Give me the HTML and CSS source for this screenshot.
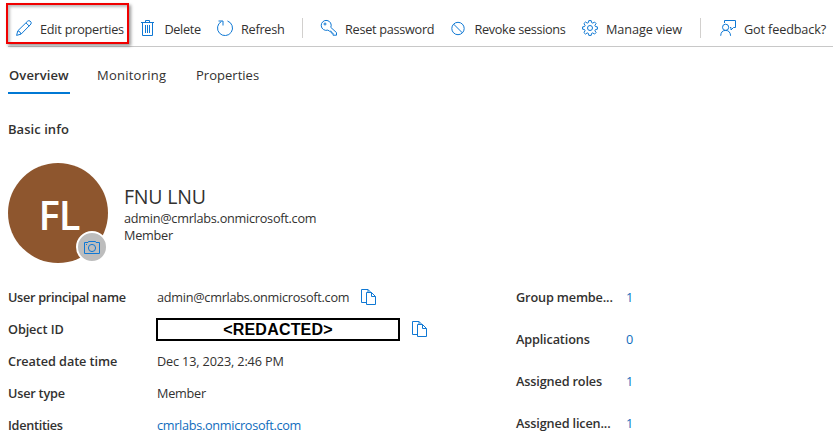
FILE: index.html
```html
<!DOCTYPE html>
<html lang="en">
<head>
<meta charset="utf-8">
<title>FNU LNU</title>
<link rel="stylesheet" href="styles.css">
</head>
<body>
<svg class="defs" width="0" height="0" aria-hidden="true">
  <symbol id="copy" viewBox="0 0 16 17"><path d="M5.5 13.5H.5V.5H7L10 3.5M7 .5V3M5.5 3.5H10.5L14.5 7.5V15.5H5.5ZM10.5 3.5V7.5H14.5"/></symbol>
</svg>
<header class="toolbar">
  <button class="cmd marked"><svg class="icon" viewBox="0 0 16 16"><path d="M.6 15.4 1.8 10.8 11.6 1.2Q12.7.2 14 1 15.8 2.2 15 4L5.1 14.1ZM10 2.9 13.2 6M2 10.8Q4.3 11.4 5 14"/></svg><span class="t-edit">Edit properties</span></button>
  <button class="cmd"><svg class="icon" viewBox="0 0 16 16"><path d="M0 2.5H13M4.5 2V.5H8.5V2M1.5 3V15.5H11.5V3M4.5 5V13M6.5 5V13M8.5 5V13"/></svg><span class="t-delete">Delete</span></button>
  <button class="cmd"><svg class="icon" viewBox="0 0 16 16"><path d="M10.5 1A7.5 7.5 0 1 1 4.4 1.5M1.5 1H6V5.5"/></svg><span class="t-refresh">Refresh</span></button>
  <span class="separator"></span>
  <button class="cmd"><svg class="icon key" viewBox="0 0 16 16"><path d="M9.8 7.4A5 5 0 1 0 6.9 10.1L8.4 11.2H10.2V13H12V15.2H15.5V12.6L9.8 7.4Z"/><circle cx="4" cy="4" r="1"/></svg><span class="t-reset">Reset password</span></button>
  <button class="cmd"><svg class="icon" viewBox="0 0 16 16"><circle cx="7" cy="8.5" r="6.2"/><path d="m2.6 4.1 8.8 8.8"/></svg><span class="t-revoke">Revoke sessions</span></button>
  <button class="cmd"><svg class="icon" viewBox="0 0 16 16"><path d="M6.8.6h2.4l.4 2 1.2.5L12.5 2l1.6 1.6-1.2 1.7.5 1.2 2 .4v2.3l-2 .4-.5 1.2 1.2 1.7-1.6 1.6-1.7-1.2-1.2.5-.4 2H6.8l-.4-2-1.2-.5-1.7 1.2-1.6-1.6 1.2-1.7-.5-1.2-2-.4V6.9l2-.4.5-1.2-1.2-1.7L3.5 2l1.7 1.1 1.2-.5Z"/><circle cx="8" cy="8" r="2.5"/></svg><span class="t-manage">Manage view</span></button>
  <span class="separator"></span>
  <button class="cmd"><svg class="icon" viewBox="0 0 16 16"><path d="M4.5 3V.5H15.5V7.5H13.5L11 10V7.5H10M.7 15.8Q1 10.4 5.6 10.4T10.6 15.8"/><circle cx="5.6" cy="7.3" r="3.1"/></svg><span class="t-feedback">Got feedback?</span></button>
</header>
<main>
  <nav class="tabs">
    <a class="tab active">Overview</a>
    <a class="tab t-monitoring">Monitoring</a>
    <a class="tab t-properties">Properties</a>
  </nav>
  <h2>Basic info</h2>
  <section class="profile">
    <div class="avatar">FL
      <span class="camera"><svg viewBox="0 0 16 13"><path d="M.5 1.5H4L4.5 .5H11.5L12 1.5H15.5V12.5H.5ZM2 3.5H3"/><circle cx="8" cy="7" r="3.6"/></svg></span>
    </div>
    <div>
      <h1>FNU LNU</h1>
      <p class="t-mail">admin@cmrlabs.onmicrosoft.com</p>
      <p class="t-member">Member</p>
    </div>
  </section>
  <section class="details">
    <dl class="info">
      <dt class="t-upn">User principal name</dt><dd><span class="t-mail">admin@cmrlabs.onmicrosoft.com</span><svg class="copy"><use href="#copy"/></svg></dd>
      <dt class="t-object">Object ID</dt><dd><span class="redacted">&lt;REDACTED&gt;</span><svg class="copy"><use href="#copy"/></svg></dd>
      <dt class="t-created">Created date time</dt><dd class="t-date">Dec 13, 2023, 2:46 PM</dd>
      <dt class="t-type">User type</dt><dd class="t-member">Member</dd>
      <dt class="t-identities">Identities</dt><dd><a class="t-domain">cmrlabs.onmicrosoft.com</a></dd>
    </dl>
    <dl class="counts">
      <dt>Group membe...</dt><dd><a>1</a></dd>
      <dt>Applications</dt><dd><a>0</a></dd>
      <dt>Assigned roles</dt><dd><a>1</a></dd>
      <dt>Assigned licen...</dt><dd><a>1</a></dd>
    </dl>
  </section>
</main>
</body>
</html>
```
FILE: styles.css
```css
*, *::after { box-sizing: border-box; }
html { overflow: hidden; }
body {
  margin: 0;
  height: 443px;
  overflow: hidden;
  background: #fff;
  color: #323130;
  font: 12.7px/18px "Open Sans", "Noto Sans", sans-serif;
  white-space: nowrap;
}
h1, h2, p, dl, dd { margin: 0; }
svg { fill: none; stroke: #0f78d4; stroke-width: 1; flex: none; }
.defs { position: absolute; }

.toolbar {
  display: grid;
  grid-template-columns: 125px 76px 85px 19px 130px 131px 118px 20px 113px;
  height: 47px;
  margin-left: 8px;
  padding: 10px 0 0 8px;
  border-bottom: 1px solid #c8c8c8;
}
.cmd {
  display: flex;
  align-items: center;
  gap: 8px;
  height: 36px;
  padding: 0;
  border: 0;
  background: none;
  color: inherit;
  font: inherit;
}
.cmd span { padding-top: 2px; }
.icon { width: 16px; height: 16px; }
.key { overflow: visible; }
.t-edit { letter-spacing: -.23px; }
.t-delete { letter-spacing: -.36px; margin-left: -.5px; }
.t-refresh { letter-spacing: -.28px; }
.t-reset { letter-spacing: -.28px; }
.t-revoke { letter-spacing: -.33px; margin-left: -.5px; }
.t-manage { letter-spacing: -.1px; }
.t-feedback { letter-spacing: -.15px; }
.marked { position: relative; }
.marked::after {
  content: "";
  position: absolute;
  left: -10px;
  top: -7px;
  width: 123px;
  height: 41px;
  border: 2px solid #f00000;
  box-shadow: 2px 2px 3px #0006, inset 2px 2px 3px #0004;
}
.separator { width: 1px; height: 20px; margin-top: 8px; background: #d2d0ce; }

main { padding-left: 8px; }
.tabs { display: flex; height: 47px; font-size: 13px; }
.tab { height: 47px; padding-top: 19px; }
.active { width: 62px; padding-left: 1px; border-bottom: 2px solid #0078d4; font-weight: 600; letter-spacing: .1px; }
.t-monitoring { margin-left: 27px; width: 99px; letter-spacing: .24px; }
.t-properties { letter-spacing: .02px; }
h2 { margin-top: 26px; font-size: 13px; line-height: 18px; font-weight: 600; letter-spacing: .05px; }

.profile { display: flex; gap: 16px; height: 100px; margin-top: 25px; }
.avatar {
  position: relative;
  width: 100px;
  height: 100px;
  padding-left: 2px;
  border-radius: 50%;
  background: #8e562e;
  color: #fff;
  font-size: 40px;
  font-weight: 600;
  line-height: 104px;
  letter-spacing: -1px;
  text-align: center;
}
.camera {
  position: absolute;
  right: 0;
  bottom: 0;
  display: flex;
  align-items: center;
  justify-content: center;
  width: 32px;
  height: 32px;
  border: 2px solid #fff;
  border-radius: 50%;
  background: #bdbdbd;
}
.camera svg { width: 16px; height: 13px; }
h1 { margin-top: 20px; font-size: 19.5px; line-height: 27px; font-weight: 400; letter-spacing: -.2px; }
.profile p { line-height: 17px; }
.t-mail { letter-spacing: -.26px; }
.t-member { letter-spacing: -.25px; }

.details { display: flex; margin-top: 18px; }
dl { display: grid; }
.info { grid-template-columns: 149px 359px; grid-auto-rows: 32px; align-items: center; }
.counts { grid-template-columns: 110px 30px; grid-auto-rows: 42px; margin-top: -5px; align-items: center; height: 168px; }
dt { font-weight: 600; }
dd { display: flex; align-items: center; }
a { color: inherit; }
dd a { color: #0f6cbd; }
.t-upn { letter-spacing: -.3px; }
.t-object { letter-spacing: -.1px; }
.t-created { letter-spacing: -.08px; }
.t-type { letter-spacing: -.22px; }
.t-identities { letter-spacing: -.3px; }
.t-date { letter-spacing: -.15px; }
.t-domain { letter-spacing: -.3px; }
.counts dt { letter-spacing: -.15px; }
.copy { width: 16px; height: 17px; margin-left: 12px; }
.redacted {
  width: 244px;
  height: 23px;
  margin-left: -1px;
  border: 2px solid #000;
  color: #000;
  font: bold 16px/19px "Liberation Sans", Arial, sans-serif;
  letter-spacing: .2px;
  text-align: center;
}
```
